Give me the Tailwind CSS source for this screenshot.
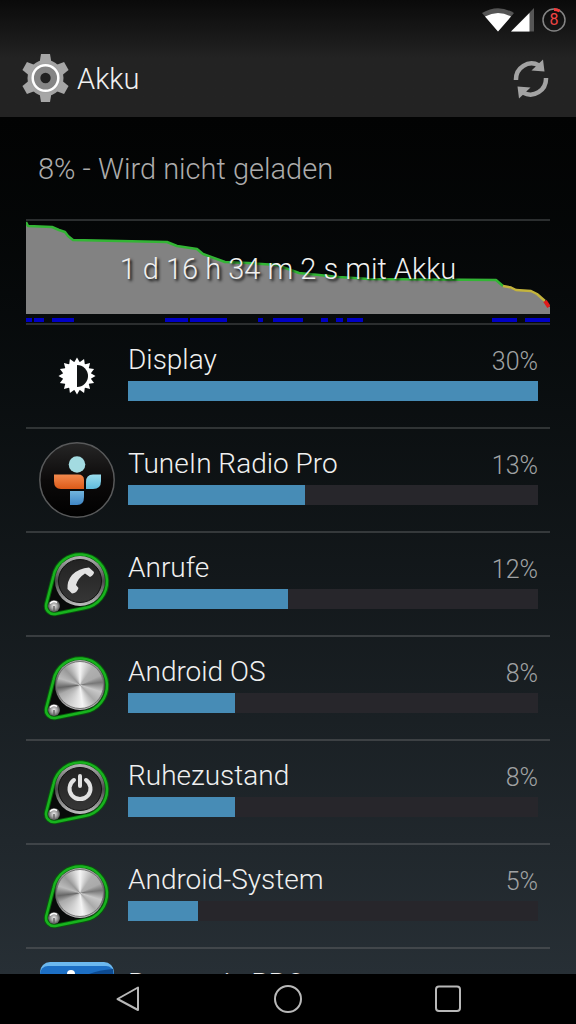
<!DOCTYPE html>
<html lang="de">
<head>
<meta charset="utf-8">
<meta name="viewport" content="width=device-width, initial-scale=1">
<title>Akku</title>
<script src="https://cdn.jsdelivr.net/npm/@tailwindcss/browser@4"></script>
</head>
<body class="flex h-screen flex-col overflow-hidden bg-black font-['Roboto','Liberation_Sans',sans-serif] text-[28px] leading-9 font-light text-[#f0f0f0]">

<svg class="absolute size-0" aria-hidden="true">
  <defs>
    <linearGradient id="rim" x1="0" y1="0" x2="0" y2="1"><stop offset="0" stop-color="#b4b4b4"/><stop offset=".5" stop-color="#4a4a4a"/><stop offset="1" stop-color="#c0c0c0"/></linearGradient>
    <linearGradient id="dark" x1="0" y1="0" x2="0" y2="1"><stop offset="0" stop-color="#222"/><stop offset="1" stop-color="#363636"/></linearGradient>
    <linearGradient id="disc" x1="0" y1="0" x2="0" y2="1"><stop offset="0" stop-color="#262626"/><stop offset=".5" stop-color="#0c0a0a"/><stop offset="1" stop-color="#000"/></linearGradient>
    <linearGradient id="orange" x1="0" y1="0" x2="0" y2="1"><stop offset="0" stop-color="#f38a4e"/><stop offset="1" stop-color="#dc5a18"/></linearGradient>
    <linearGradient id="blue" x1="0" y1="0" x2="0" y2="1"><stop offset="0" stop-color="#72b4dc"/><stop offset="1" stop-color="#3f86c6"/></linearGradient>
    <linearGradient id="cyan" x1="0" y1="0" x2="0" y2="1"><stop offset="0" stop-color="#9adcec"/><stop offset="1" stop-color="#5fbbdc"/></linearGradient>
    <radialGradient id="screw"><stop offset="0" stop-color="#eee"/><stop offset=".6" stop-color="#999"/><stop offset="1" stop-color="#555"/></radialGradient>
    <g id="drop">
      <path d="M14.600 29.800A27 27 0 1 1 45.600 62.100L16.400 67.900A8 8 0 0 1 7.200 58.300Z" fill="#080a09" stroke="#075c0b" stroke-width="4.500"/>
      <path d="M14.600 29.800A27 27 0 1 1 45.600 62.100L16.400 67.900A8 8 0 0 1 7.200 58.300Z" fill="none" stroke="#18b31e" stroke-width="2.500"/>
      <circle cx="15" cy="60" r="6" fill="url(#screw)"/>
      <path d="M15 60v5" stroke="#666" stroke-width="1.500"/>
      <path d="M11 57.500a5.500 5.500 0 0 1 7-1" fill="none" stroke="#fff" stroke-width="1.500"/>
      <circle cx="41" cy="35" r="25" fill="url(#rim)"/>
    </g>
  </defs>
</svg>

<header class="shrink-0 bg-linear-to-b from-[#0a0a0a] to-[#232323] to-50%">
  <div class="flex h-10 items-center justify-end pr-[10px]" aria-label="Statusleiste">
    <svg class="h-6 w-8" viewBox="0 0 32 24" aria-hidden="true">
      <path d="M16 23.500L0 5Q16-4.500 32 5Z" fill="#555"/>
      <path d="M16 23.500L3 8.500Q16 1.500 29 8.500Z" fill="#fff"/>
    </svg>
    <svg class="-ml-1 h-6 w-6" viewBox="0 0 24 24" aria-hidden="true">
      <path d="M1 23.500L24 0V23.500Z" fill="#555"/>
      <path d="M1 23.500L19.500 5V23.500Z" fill="#fff"/>
    </svg>
    <span class="relative ml-2 flex size-6 items-center justify-center text-base leading-6 font-normal text-[#f04444]">
      <svg class="absolute inset-0 size-6" viewBox="0 0 24 24" fill="none" aria-hidden="true">
        <circle cx="12" cy="12" r="11" stroke="#858585" stroke-width="1.500"/>
        <path d="M12 1.500A10.500 10.500 0 0 1 17.500 3" stroke="#f03a3a" stroke-width="3"/>
      </svg>8</span>
  </div>
  <div class="flex items-center justify-between pr-[27px] pb-[15px] pl-[22px]">
    <h1 class="flex items-center gap-2">
      <svg class="h-[62px] w-[47px]" viewBox="-23.500 -31 47 62" aria-hidden="true">
        <g transform="translate(0 7)">
          <circle r="18" fill="#a2a2a2"/>
          <g fill="#a6a6a6">
            <path d="M-4.500-24h9l1.500 9h-12z"/><path d="M-4.500-24h9l1.500 9h-12z" transform="rotate(60)"/><path d="M-4.500-24h9l1.500 9h-12z" transform="rotate(120)"/><path d="M-4.500-24h9l1.500 9h-12z" transform="rotate(180)"/><path d="M-4.500-24h9l1.500 9h-12z" transform="rotate(240)"/><path d="M-4.500-24h9l1.500 9h-12z" transform="rotate(300)"/>
          </g>
          <circle r="12.800" fill="#858585" stroke="#fff" stroke-width="2.500"/>
          <circle r="5.200" fill="#202020"/>
        </g>
      </svg>
      <span class="pt-4 text-[29px]">Akku</span>
    </h1>
    <button type="button" aria-label="Aktualisieren" class="pt-4">
      <svg class="h-10 w-9" viewBox="0 0 36 40" aria-hidden="true">
        <g id="arrow">
          <path d="M3 21A15.500 16 0 0 1 26 6.500" fill="none" stroke="#a3a3a3" stroke-width="4.500"/>
          <path d="M30 0.500L31.500 12.500L18.500 11.500Z" fill="#a3a3a3"/>
        </g>
        <use href="#arrow" transform="rotate(180 18 20)"/>
      </svg>
    </button>
  </div>
</header>

<main class="min-h-0 flex-1 overflow-hidden bg-linear-to-b from-[#020303] to-[#272f35] px-[26px]">
  <p class="px-3 pt-[34px] pb-8 text-[29px] text-[#acacac]">8% - Wird nicht geladen</p>

  <section class="relative border-t-2 border-[#2b2e2f]" aria-label="Akkuverlauf">
    <svg class="block h-[102px] w-full" viewBox="0 0 524 102" preserveAspectRatio="none" aria-hidden="true">
      <path d="M0 2L2 5L26 6L33 9L39 11L42 15L47 19L141 21L151 25L171 28L177 33L199 41L222 42L251 44L273 52L313 56L343 58L470 59L477 65L490 69L505 70L515 76L524 86V93H0Z" fill="#828282"/>
      <g fill="none" stroke-width="2.500" stroke-linejoin="round">
        <path d="M0 1L2 5L26 6L33 9L39 11L42 15L47 19L141 21L151 25L171 28L177 33L199 41L222 42L251 44L273 52L313 56L343 58L470 59L477 65" stroke="#33b535"/>
        <path d="M477 65L485 66.500L490 69L505 70L511 73L519 80" stroke="#c4b43c"/>
        <path d="M519 80L523 86" stroke="#e01b1b" stroke-width="4"/>
      </g>
      <path d="M0 99H6M8 99H18M26 99H48M139 99H162M164 99H201M232 99H237M247 99H277M295 99H302M310 99H317M321 99H337M466 99H491M499 99H524" stroke="#0000c4" stroke-width="4"/>
    </svg>
    <p class="absolute inset-x-0 top-[30px] text-center text-[29px] [text-shadow:2px_2px_3px_#000]">1 d 16 h 34 m 2 s mit Akku</p>
  </section>

  <ul>
    <li class="flex items-center border-t-2 border-[#2b2e2f]">
      <svg class="mx-[13px] size-[76px] shrink-0" viewBox="-38 -38 76 76" aria-hidden="true">
        <g fill="#fff">
          <circle r="14"/>
          <g id="rays"><path d="M-3.500-12.500L0-18.500L3.500-12.500Z"/><path d="M-3.500-12.500L0-18.500L3.500-12.500Z" transform="rotate(22.500)"/><path d="M-3.500-12.500L0-18.500L3.500-12.500Z" transform="rotate(45)"/><path d="M-3.500-12.500L0-18.500L3.500-12.500Z" transform="rotate(67.500)"/></g>
          <use href="#rays" transform="rotate(90)"/><use href="#rays" transform="rotate(180)"/><use href="#rays" transform="rotate(270)"/>
        </g>
        <path d="M0-11A11 11 0 0 1 0 11Z" fill="#101314"/>
      </svg>
      <div class="flex-1 pt-[17px] pr-3 pb-[26px]">
        <div class="flex justify-between"><span id="n1">Display</span><span class="pt-1 text-[25px] leading-8 text-[#a0a2a3]">30%</span></div>
        <div role="progressbar" aria-labelledby="n1" aria-valuenow="30" class="mt-[3px] h-5 bg-[#27262b]"><div class="h-full bg-[#478cb6]" style="width:100%"></div></div>
      </div>
    </li>
    <li class="flex items-center border-t-2 border-[#303435]">
      <svg class="mx-[13px] size-[76px] shrink-0" viewBox="0 0 76 76" aria-hidden="true">
        <circle cx="38" cy="38" r="37.200" fill="url(#disc)" stroke="#58595a" stroke-width="1.500"/>
        <circle cx="38" cy="22.500" r="8.300" fill="#a3dbe1"/>
        <path d="M15 32.500H39Q45 32.500 45 38V47H22Q15 47 15 39Z" fill="url(#orange)"/>
        <path d="M47 47V40Q47 32.500 54 32.500H62V39Q62 47 54 47Z" fill="url(#cyan)"/>
        <path d="M31 49H45V55Q45 63 38 63H31Z" fill="url(#blue)"/>
      </svg>
      <div class="flex-1 pt-[17px] pr-3 pb-[26px]">
        <div class="flex justify-between"><span id="n2">TuneIn Radio Pro</span><span class="pt-1 text-[25px] leading-8 text-[#a0a2a3]">13%</span></div>
        <div role="progressbar" aria-labelledby="n2" aria-valuenow="13" class="mt-[3px] h-5 bg-[#27262b]"><div class="h-full bg-[#478cb6]" style="width:43.2%"></div></div>
      </div>
    </li>
    <li class="flex items-center border-t-2 border-[#35393b]">
      <svg class="mx-[13px] size-[76px] shrink-0" viewBox="0 0 76 76" aria-hidden="true">
        <use href="#drop"/>
        <circle cx="41" cy="35" r="21.500" fill="url(#dark)" stroke="#111"/>
        <path d="M50 21.500L55 26Q55 29 51 31L46 27.500Q39 32 37 39L39.500 42Q38 47 33 47.500L28.500 43Q28 35 33 29Q40 22 50 21.500Z" fill="#e2e2e2"/>
      </svg>
      <div class="flex-1 pt-[17px] pr-3 pb-[26px]">
        <div class="flex justify-between"><span id="n3">Anrufe</span><span class="pt-1 text-[25px] leading-8 text-[#a0a2a3]">12%</span></div>
        <div role="progressbar" aria-labelledby="n3" aria-valuenow="12" class="mt-[3px] h-5 bg-[#27262b]"><div class="h-full bg-[#478cb6]" style="width:39.1%"></div></div>
      </div>
    </li>
    <li class="flex items-center border-t-2 border-[#393d40]">
      <svg class="mx-[13px] size-[76px] shrink-0" viewBox="0 0 76 76" aria-hidden="true">
        <use href="#drop"/>
        <foreignObject x="17" y="11" width="48" height="48"><div class="size-12 rounded-full border border-[#777] bg-[conic-gradient(#f4f4f4,#b0b0b0_10%,#aaa_18%,#777_23%,#c8c8c8_30%,#aaa_38%,#f4f4f4_48%,#d0d0d0_58%,#aaa_68%,#666_73%,#bbb_80%,#999_88%,#f4f4f4)]"></div></foreignObject>
      </svg>
      <div class="flex-1 pt-[17px] pr-3 pb-[26px]">
        <div class="flex justify-between"><span id="n4">Android OS</span><span class="pt-1 text-[25px] leading-8 text-[#a0a2a3]">8%</span></div>
        <div role="progressbar" aria-labelledby="n4" aria-valuenow="8" class="mt-[3px] h-5 bg-[#27262b]"><div class="h-full bg-[#478cb6]" style="width:26.1%"></div></div>
      </div>
    </li>
    <li class="flex items-center border-t-2 border-[#3d4144]">
      <svg class="mx-[13px] size-[76px] shrink-0" viewBox="0 0 76 76" aria-hidden="true">
        <use href="#drop"/>
        <circle cx="41" cy="35" r="21.500" fill="url(#dark)" stroke="#111"/>
        <path d="M35 26A10.500 10.500 0 1 0 47 26M41 22V32" fill="none" stroke="#e2e2e2" stroke-width="4" stroke-linecap="round"/>
      </svg>
      <div class="flex-1 pt-[17px] pr-3 pb-[26px]">
        <div class="flex justify-between"><span id="n5">Ruhezustand</span><span class="pt-1 text-[25px] leading-8 text-[#a0a2a3]">8%</span></div>
        <div role="progressbar" aria-labelledby="n5" aria-valuenow="8" class="mt-[3px] h-5 bg-[#27262b]"><div class="h-full bg-[#478cb6]" style="width:26.1%"></div></div>
      </div>
    </li>
    <li class="flex items-center border-t-2 border-[#3f4448]">
      <svg class="mx-[13px] size-[76px] shrink-0" viewBox="0 0 76 76" aria-hidden="true">
        <use href="#drop"/>
        <foreignObject x="17" y="11" width="48" height="48"><div class="size-12 rounded-full border border-[#777] bg-[conic-gradient(#f4f4f4,#b0b0b0_10%,#aaa_18%,#777_23%,#c8c8c8_30%,#aaa_38%,#f4f4f4_48%,#d0d0d0_58%,#aaa_68%,#666_73%,#bbb_80%,#999_88%,#f4f4f4)]"></div></foreignObject>
      </svg>
      <div class="flex-1 pt-[17px] pr-3 pb-[26px]">
        <div class="flex justify-between"><span id="n6">Android-System</span><span class="pt-1 text-[25px] leading-8 text-[#a0a2a3]">5%</span></div>
        <div role="progressbar" aria-labelledby="n6" aria-valuenow="5" class="mt-[3px] h-5 bg-[#27262b]"><div class="h-full bg-[#478cb6]" style="width:17.1%"></div></div>
      </div>
    </li>
    <li class="flex items-center border-t-2 border-[#42474b]">
      <svg class="mx-[13px] size-[76px] shrink-0" viewBox="0 0 76 76" aria-hidden="true">
        <rect x="1" y="0" width="74" height="76" rx="10" fill="#6cb8ee"/>
        <rect x="1" y="4" width="74" height="72" rx="8" fill="#1d6fc4"/>
        <path d="M50 12Q60 8 74 7V15H50Z" fill="#0d4a90"/>
        <circle cx="32" cy="12" r="4" fill="#fff"/>
      </svg>
      <div class="flex-1 pt-[17px] pr-3 pb-[26px]">
        <div class="flex justify-between"><span id="n7">Runtastic PRO</span></div>
        <div role="progressbar" aria-labelledby="n7" class="mt-[3px] h-5 bg-[#27262b]"></div>
      </div>
    </li>
  </ul>
</main>

<nav class="flex shrink-0 justify-center gap-[120px] bg-black py-[5px]" aria-label="Navigation">
  <button type="button" aria-label="Zurück" class="size-10"><svg viewBox="0 0 40 40" fill="none" stroke="#b8b8b8" stroke-width="2" stroke-linejoin="round" aria-hidden="true"><path d="M30 8.500V31L9.500 20Z"/></svg></button>
  <button type="button" aria-label="Startseite" class="size-10"><svg viewBox="0 0 40 40" fill="none" stroke="#b8b8b8" stroke-width="2" aria-hidden="true"><circle cx="20" cy="20" r="13"/></svg></button>
  <button type="button" aria-label="Übersicht" class="size-10"><svg viewBox="0 0 40 40" fill="none" stroke="#b8b8b8" stroke-width="2" aria-hidden="true"><rect x="8" y="7.500" width="24" height="24.500" rx="3"/></svg></button>
</nav>
</body>
</html>
